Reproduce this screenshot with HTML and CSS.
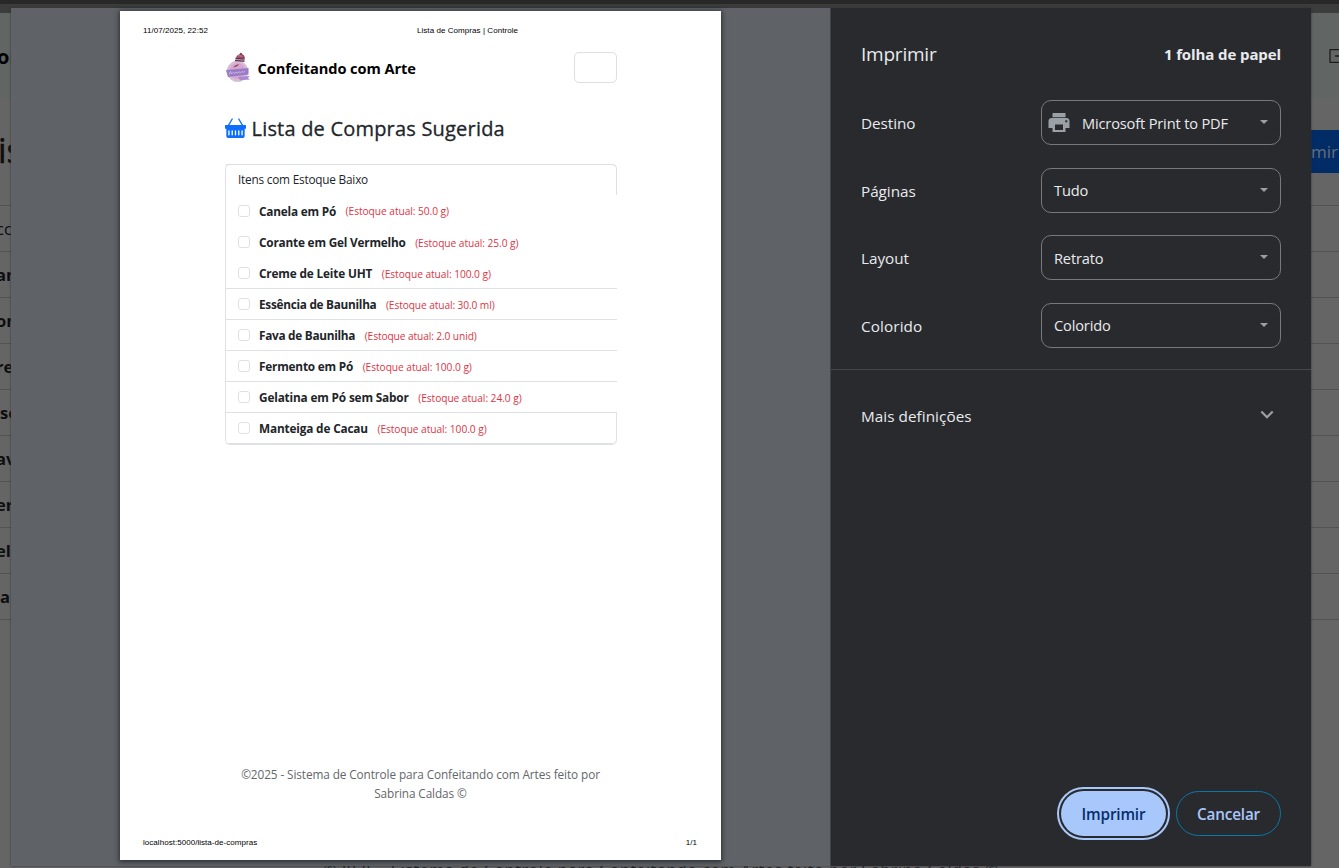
FILE: index.html
```
<!DOCTYPE html>
<html lang="pt-BR">
<head>
<meta charset="utf-8">
<title>Lista de Compras | Controle</title>
<link rel="stylesheet" href="styles.css">
</head>
<body>
<div class="backdrop">
  <div class="topbar"></div>
  <div class="columns">
    <div class="edge">
      <div class="edge-nav"><b>on</b></div>
      <div class="edge-title">is</div>
      <div class="edge-row light">cc</div>
      <div class="edge-row">an</div>
      <div class="edge-row">on</div>
      <div class="edge-row">re</div>
      <div class="edge-row s">se</div>
      <div class="edge-row">av</div>
      <div class="edge-row">er</div>
      <div class="edge-row">el</div>
      <div class="edge-row s">a</div>
      <div class="edge-end"></div>
    </div>
    <div class="middle"><span>©2025 - Sistema de Controle para Confeitando com Artes feito por Sabrina Caldas ©</span></div>
    <div class="edge right">
      <div class="edge-nav"><svg width="10" height="16" viewBox="0 0 10 16"><path d="M11 1.700H1v12.600h10M6 8h5" fill="none" stroke="#1c1c1c" stroke-width="1.300"/></svg></div>
      <div class="edge-title"><span class="blue-btn">mir</span></div>
      <div class="edge-row"></div><div class="edge-row"></div><div class="edge-row"></div><div class="edge-row"></div><div class="edge-row"></div><div class="edge-row"></div><div class="edge-row"></div><div class="edge-row"></div><div class="edge-row"></div>
      <div class="edge-end"></div>
    </div>
  </div>
</div>

<div class="dialog">
  <div class="preview">
    <div class="paper">
      <div class="print-head"><span>11/07/2025, 22:52</span><span class="doc">Lista de Compras | Controle</span></div>
      <div class="content">
        <div class="brand">
          <svg class="logo" width="27" height="31" viewBox="0 0 27 31">
            <circle cx="12.500" cy="19.300" r="10.300" fill="#dcb9da" stroke="#c9c6cf"/>
            <circle cx="12.500" cy="19" r="8" fill="#d7a6d0"/>
            <path d="M10 9.500L11 5h9l-.6 4.500Z" fill="#b58a9b"/>
            <path d="M11 5.500Q12 2.500 14.500 2.200Q16-.5 17.300 2.200Q20 3 19.300 6Z" fill="#8f3d5e"/>
            <path d="M10.500 6.200l9 .8M10 8.500l9.500 .8" stroke="#552d42"/>
            <path d="M12.500 3.700l5 .5" stroke="#d88fb1"/>
            <path d="M8 15.500q2-2.800 6-3.500q-1 2.800-6 3.500" fill="#8a4a52"/>
            <path d="M1 18L23.500 16v6.500L3 25Z" fill="#9a7cc6"/>
            <path d="M13 25l11.500-1-1.500 2 2 1.500-10 .8Z" fill="#a98ad0"/>
            <path d="M4 22.500l1.500-3 1 2.500 1.500-1.500 1.500 1 1.500-1.500 1.500 1.200 1.500-1.500 1.500 1.200 1.500-1.500 1.500 1 1.500-1.200" fill="none" stroke="#d6c5ec" stroke-width=".8"/>
          </svg>
          <span class="brand-name">Confeitando com Arte</span>
          <span class="toggler"></span>
        </div>
        <h1 class="title">
          <svg width="21" height="21" viewBox="0 0 16 16" fill="#0d6efd"><path d="M5.071 1.243a.5.5 0 0 1 .858.514L3.383 6h9.234L10.070 1.757a.5.5 0 1 1 .858-.514L13.783 6H15.500a.5.5 0 0 1 .5.5v2a.5.5 0 0 1-.5.5H15v5a2 2 0 0 1-2 2H3a2 2 0 0 1-2-2V9H.5a.5.5 0 0 1-.5-.5v-2A.5.5 0 0 1 .5 6h1.717zM3.500 10.500a.5.5 0 1 0-1 0v3a.5.5 0 0 0 1 0zm2.500 0a.5.5 0 1 0-1 0v3a.5.5 0 0 0 1 0zm2.500 0a.5.5 0 1 0-1 0v3a.5.5 0 0 0 1 0zm2.500 0a.5.5 0 1 0-1 0v3a.5.5 0 0 0 1 0zm2.500 0a.5.5 0 1 0-1 0v3a.5.5 0 0 0 1 0z"/></svg>
          <span>Lista de Compras Sugerida</span>
        </h1>
        <div class="card">
          <div class="card-head">Itens com Estoque Baixo</div>
          <div class="item"><i></i><b>Canela em Pó</b><small>(Estoque atual: 50.0 g)</small></div>
          <div class="item low"><i></i><b>Corante em Gel Vermelho</b><small>(Estoque atual: 25.0 g)</small></div>
          <div class="item low"><i></i><b class="wide">Creme de Leite UHT</b><small>(Estoque atual: 100.0 g)</small></div>
          <div class="item line"><i></i><b class="tight">Essência de Baunilha</b><small class="tight">(Estoque atual: 30.0 ml)</small></div>
          <div class="item line"><i></i><b class="tight">Fava de Baunilha</b><small class="tight">(Estoque atual: 2.0 unid)</small></div>
          <div class="item line"><i></i><b>Fermento em Pó</b><small>(Estoque atual: 100.0 g)</small></div>
          <div class="item line"><i></i><b class="wide">Gelatina em Pó sem Sabor</b><small>(Estoque atual: 24.0 g)</small></div>
          <div class="item line last"><i></i><b class="wide">Manteiga de Cacau</b><small>(Estoque atual: 100.0 g)</small></div>
        </div>
        <div class="credits">©2025 - Sistema de Controle para Confeitando com Artes feito por<br>Sabrina Caldas ©</div>
      </div>
      <div class="print-foot"><span>localhost:5000/lista-de-compras</span><span>1/1</span></div>
    </div>
  </div>
  <div class="panel">
    <div class="panel-head"><span class="panel-title">Imprimir</span><span class="sheets">1 folha de papel</span></div>
    <div class="settings">
      <div class="setting"><label>Destino</label><div class="select dest"><svg width="22" height="20" viewBox="0 0 22 20"><path fill="#9aa0a6" fill-rule="evenodd" d="M4.500 0h13v4.300h-13zM3.500 5h15A3.200 3.200 0 0 1 21.500 8.200V15H17.500v4H4.500v-4H.5V8.200A3.200 3.200 0 0 1 3.500 5ZM7 11.500v5.500h8v-5.500Zm10.300-4.200v2h2v-2Z"/></svg><span>Microsoft Print to PDF</span><em></em></div></div>
      <div class="setting"><label>Páginas</label><div class="select"><span>Tudo</span><em></em></div></div>
      <div class="setting"><label>Layout</label><div class="select"><span>Retrato</span><em></em></div></div>
      <div class="setting"><label class="color">Colorido</label><div class="select"><span>Colorido</span><em></em></div></div>
    </div>
    <div class="more"><span>Mais definições</span><svg width="14" height="10" viewBox="0 0 14 10"><path d="M1.300 1.500L7 7.200l5.700-5.700" fill="none" stroke="#9aa0a6" stroke-width="2.200"/></svg></div>
    <div class="actions"><button class="print">Imprimir</button><button class="cancel">Cancelar</button></div>
  </div>
</div>
</body>
</html>
```
FILE: styles.css
```
* { box-sizing: border-box; }
body { margin: 0; width: 1339px; height: 868px; overflow: hidden; position: relative; font-family: "Open Sans", "Noto Sans", sans-serif; }

.backdrop { height: 868px; background: #656565; overflow: hidden; }
.topbar { height: 13px; background: #3c3c3c; border-top: 4px solid #282828; }
.columns { display: flex; height: 855px; }
.edge { width: 11px; overflow: hidden; white-space: nowrap; color: #0d0e10; }
.edge.right { width: 28px; }
.edge-nav { height: 85px; display: flex; align-items: center; background: #616563; font-size: 20px; color: #000; }
.edge-nav b { margin-left: -3px; padding-top: 2px; }
.right .edge-nav { padding-left: 18px; }
.edge-title { height: 107px; display: flex; align-items: center; font-size: 34px; line-height: 40px; font-weight: 500; margin-left: -2px; padding-bottom: 3px; -webkit-text-stroke: .5px; }
.right .edge-title { margin-left: 0; padding: 0; -webkit-text-stroke: 0; }
.blue-btn { width: 28px; height: 43px; background: #022c66; color: #666e7a; font-size: 17px; line-height: 43px; font-weight: 400; }
.edge-row { height: 46px; border-top: 1px solid #525252; line-height: 45px; font-size: 16.500px; font-weight: 700; margin-left: -8px; padding-left: 4px; }
.edge-row.light { font-weight: 400; }
.edge-row.s { padding-left: 8px; }
.right .edge-row { margin: 0; }
.edge-end { border-top: 1px solid #525252; }
.middle { flex: 1; display: flex; align-items: flex-end; justify-content: center; height: 869px; font-size: 16px; line-height: 24px; color: #222427; }
.middle span { letter-spacing: .6px; }

.dialog { position: absolute; left: 11px; top: 8px; width: 1300px; height: 858px; display: flex; background: #292a2d; box-shadow: 0 0 2px #333; }
.preview { width: 820px; padding: 3px 0 0 109px; background: #5f6368; border-right: 1px solid #414346; }
.paper { width: 601px; height: 849px; background: #fff; box-shadow: 0 1px 5px 1px rgba(0,0,0,.55); display: flex; flex-direction: column; }
.print-head { height: 39px; padding: 14px 23px 0; display: flex; font: 8px/11px "Liberation Sans", Arial, sans-serif; color: #000; letter-spacing: .06px; }
.doc { margin-left: 209px; }
.content { width: 392px; margin-left: 105px; flex: 1; }
.brand { height: 36px; display: flex; align-items: center; }
.brand-name { margin-left: 5.500px; font-size: 14.600px; font-weight: 700; letter-spacing: -.07px; color: #000; }
.toggler { width: 43px; height: 31px; margin: -2px 0 0 auto; border: 1px solid #dedfe0; border-radius: 5px; }
.logo { margin-top: -2px; flex: none; }
.title { margin: 29px 0 0; height: 28px; display: flex; align-items: center; gap: 5.500px; font-size: 20px; line-height: 28px; font-weight: 500; letter-spacing: .2px; -webkit-text-stroke: .3px; color: #212529; }
.title svg { margin-top: -4px; }
.card { margin-top: 21px; height: 281px; border: 1px solid #dee2e6; border-right: 0; border-radius: 5px; color: #212529; }
.card-head { height: 31px; margin-top: -1px; border-top: 1px solid #dedfe1; border-right: 1px solid #dedfe1; border-top-right-radius: 5px; padding-left: 12px; font-size: 11.800px; line-height: 29px; letter-spacing: -.21px; }
.item { height: 31px; display: flex; align-items: center; padding-left: 12px; }
.item i { width: 12px; height: 12px; border: 1px solid #dee2e6; border-radius: 3px; margin-right: 9px; }
.item b { font-size: 11.800px; letter-spacing: -.2px; }
.item small { margin-left: 9.500px; font-size: 10.200px; letter-spacing: -.05px; color: #dc3545; padding-top: 1px; }
.item.low b { padding-top: 1px; }
.item.low small { padding-top: 2px; }
.item b.tight { letter-spacing: -.28px; }
.item b.wide { letter-spacing: -.16px; }
.item small.tight { letter-spacing: -.1px; }
.line { border-top: 1px solid #dee2e6; }
.last { height: 32px; border-right: 1px solid #dee2e6; border-bottom: 1px solid #dee2e6; border-radius: 0 0 5px 0; }
.credits { margin-top: 320px; margin-left: -1px; text-align: center; font-size: 11.800px; line-height: 19px; letter-spacing: -.1px; color: #64676a; }
.print-foot { padding: 0 24px 12px 23px; display: flex; justify-content: space-between; font: 8px/11px "Liberation Sans", Arial, sans-serif; letter-spacing: .04px; color: #000; }

.panel { width: 480px; display: flex; flex-direction: column; color: #e8eaed; }
.panel-head { height: 92px; padding: 0 30px; display: flex; justify-content: space-between; align-items: center; }
.panel-title { font-size: 19px; letter-spacing: -.22px; }
.sheets { font-size: 15px; font-weight: 700; letter-spacing: -.1px; }
.settings { height: 270px; padding: 0 30px; border-bottom: 1px solid #45474a; }
.setting { height: 67.600px; display: flex; justify-content: space-between; align-items: flex-start; }
.setting label { font-size: 15.300px; line-height: 46px; letter-spacing: -.05px; }
.setting label.color { letter-spacing: .1px; }
.select { width: 240px; height: 45px; border: 1px solid #77797c; border-radius: 10px; display: flex; align-items: center; padding: 0 12px; font-size: 14.600px; letter-spacing: -.15px; }
.select em { margin-left: auto; border: 4.500px solid transparent; border-top-color: #9aa0a6; border-bottom: 0; margin-top: -1px; }
.dest { padding-left: 7px; }
.dest svg { margin-left: -1px; }
.dest span { margin-left: 12px; }
.more { height: 94px; padding: 0 37px 2px 30px; display: flex; justify-content: space-between; align-items: center; font-size: 15.300px; letter-spacing: .04px; }
.more svg { margin-top: -2px; }
.actions { margin-top: auto; padding: 0 30px 30px; display: flex; justify-content: flex-end; gap: 10px; }
.actions button { width: 105px; height: 45px; border-radius: 23px; font: 600 15.300px "Open Sans", sans-serif; letter-spacing: -.16px; padding: 0; }
.print { background: #a8c7fa; color: #062e6f; border: 0; outline: 2px solid #a8c7fa; outline-offset: 2px; }
.cancel { background: transparent; color: #a8c7fa; border: 1px solid #0b76a8; }
```
